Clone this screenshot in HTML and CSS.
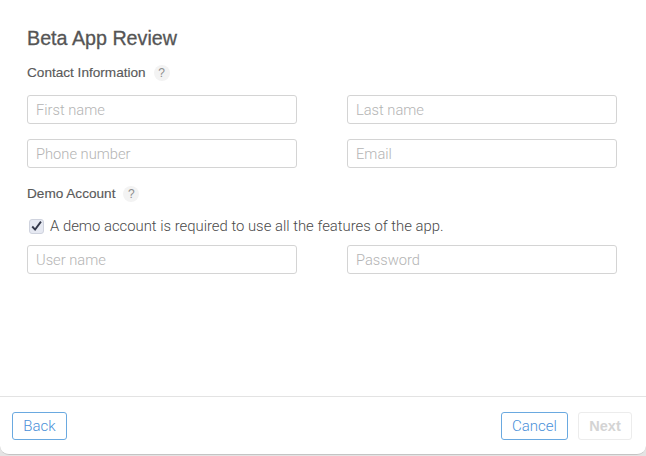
FILE: index.html
```html
<!DOCTYPE html>
<html lang="en">
<head>
<meta charset="utf-8">
<title>Beta App Review</title>
<link rel="stylesheet" href="styles.css">
</head>
<body>
<div class="dialog">
  <main class="content">
    <h1 class="title">Beta App Review</h1>
    <div class="section-label contact-label"><span>Contact Information</span><span class="help">?</span></div>
    <div class="field-grid">
      <input class="field" placeholder="First name">
      <input class="field" placeholder="Last name">
      <input class="field" placeholder="Phone number">
      <input class="field" placeholder="Email">
    </div>
    <div class="section-label demo-label"><span>Demo Account</span><span class="help">?</span></div>
    <label class="check-row">
      <span class="checkbox">
        <svg viewBox="0 0 14 14" width="15" height="15"><path d="M2.4 7 5.5 10.4 11.8 1.8" fill="none" stroke="#33384a" stroke-width="2"/></svg>
      </span>
      <span>A demo account is required to use all the features of the app.</span>
    </label>
    <div class="field-grid">
      <input class="field" placeholder="User name">
      <input class="field" placeholder="Password">
    </div>
  </main>
  <footer class="footer">
    <button class="btn btn-back">Back</button>
    <div class="footer-right">
      <button class="btn btn-cancel">Cancel</button>
      <button class="btn btn-disabled">Next</button>
    </div>
  </footer>
</div>
</body>
</html>
```

FILE: styles.css
```css
* { box-sizing: border-box; }
html, body { margin: 0; height: 100%; }
body { font-family: "Liberation Sans", Arial, sans-serif; overflow: hidden; background: #e4e4e4; }
.dialog {
  width: 646px; height: 455px; background: #fff;
  border-radius: 0 0 9px 9px;
  border-bottom: 1px solid #c4c4c4;
  display: flex; flex-direction: column;
}
.content { flex: 1; padding: 27px 29px 0 27px; }
.title { margin: 0; font-size: 19.7px; line-height: 22px; font-weight: 400; color: #555; -webkit-text-stroke: 0.3px #555; }
.section-label { display: flex; align-items: center; font-size: 13.6px; line-height: 16px; color: #5a5a5a; -webkit-text-stroke: 0.15px #5a5a5a; }
.contact-label { margin-top: 16px; }
.demo-label { margin-top: 18px; }
.help {
  width: 16px; height: 16px; border-radius: 50%; background: #f3f3f3;
  color: #8e8e8e; font-size: 12px; line-height: 16px; text-align: center;
  margin-left: 8px; -webkit-text-stroke: 0;
}
.field-grid { display: grid; grid-template-columns: 270px 270px; column-gap: 50px; row-gap: 15px; }
.contact-label + .field-grid { margin-top: 14px; }
.field {
  width: 100%; height: 29px; padding: 1px 8px 0; border: 1px solid #d4d4d4; border-radius: 3px;
  background: #fff; font-family: Roboto, sans-serif; font-weight: 300; font-size: 14.7px; color: #444; outline: none;
}
.field::placeholder { color: #b4b4b4; opacity: 1; }
.check-row { display: flex; align-items: center; gap: 6px; height: 18px; margin: 15px 0 10px 2px; font-family: Roboto, sans-serif; font-weight: 300; font-size: 14.85px; color: #4a4a4a; }
.checkbox {
  width: 15px; height: 15px; border: 1px solid #cfd3de; border-radius: 3px; background: #e6e9f2;
  display: flex; align-items: center; justify-content: center;
}
.footer {
  height: 58px; border-top: 1px solid #e3e3e3; padding: 15px 14px 0 12px;
  display: flex; justify-content: space-between; align-items: flex-start;
}
.footer-right { display: flex; gap: 10px; }
.btn {
  height: 28px; padding: 0; border: 1px solid #6aa9e0; border-radius: 3px; background: #fff;
  color: #4a90d9; font-family: Roboto, sans-serif; font-weight: 300; font-size: 15px;
}
.btn-back { width: 55px; }
.btn-cancel { width: 67px; }
.btn-disabled { width: 54px; border-color: #ececec; color: #d4d4d4; font-family: "Liberation Sans", sans-serif; font-weight: 700; font-size: 14.5px; }
```
